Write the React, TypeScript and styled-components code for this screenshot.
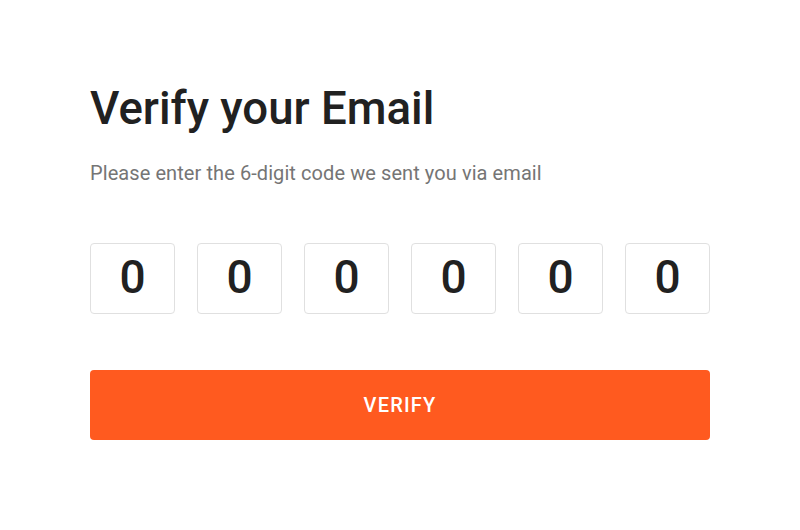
import React from "react";
import styled, { createGlobalStyle } from "styled-components";

const GlobalStyle = createGlobalStyle`
  * {
    box-sizing: border-box;
  }
  body {
    margin: 0;
    background: #fff;
    font-family: Roboto, "Liberation Sans", Arial, sans-serif;
  }
`;

const Page = styled.main`
  width: 800px;
  height: 530px;
  padding: 79px 90px 0;
  display: flex;
  flex-direction: column;
`;

const Title = styled.h1`
  margin: 0;
  font-size: 45.6px;
  line-height: 60px;
  font-weight: 500;
  color: #212121;
`;

const Subtitle = styled.p`
  margin: 22px 0 0;
  font-size: 20px;
  line-height: 24px;
  letter-spacing: 0.08px;
  color: #757575;
`;

const CodeRow = styled.div`
  margin-top: 58px;
  display: flex;
  justify-content: space-between;
`;

const Digit = styled.input`
  width: 85px;
  height: 71px;
  padding: 0 0 4px;
  border: 1px solid #e0e0e0;
  border-radius: 4px;
  background: #fff;
  text-align: center;
  font-family: Roboto, "Liberation Sans", Arial, sans-serif;
  font-size: 46px;
  font-weight: 500;
  color: #212121;
  outline: none;
`;

const VerifyButton = styled.button`
  margin-top: 56px;
  width: 100%;
  height: 70px;
  border: none;
  border-radius: 4px;
  background: #ff5a1f;
  color: #fff;
  font-family: Roboto, "Liberation Sans", Arial, sans-serif;
  font-size: 20px;
  font-weight: 500;
  letter-spacing: 1.2px;
  cursor: pointer;
`;

const digits = ["0", "0", "0", "0", "0", "0"];

function App() {
  return (
    <>
      <GlobalStyle />
      <Page>
        <Title>Verify your Email</Title>
        <Subtitle>Please enter the 6-digit code we sent you via email</Subtitle>
        <CodeRow>
          {digits.map((d, i) => (
            <Digit key={i} defaultValue={d} maxLength={1} />
          ))}
        </CodeRow>
        <VerifyButton type="button">VERIFY</VerifyButton>
      </Page>
    </>
  );
}

export default App;
